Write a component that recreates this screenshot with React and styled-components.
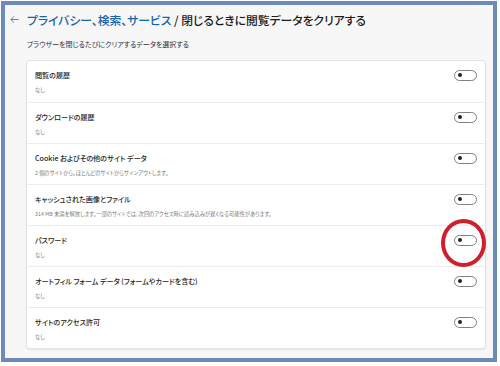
import React from 'react'
import styled, { createGlobalStyle } from 'styled-components';

const GlobalStyle = createGlobalStyle`
    html, body {
        margin: 0;
        padding: 0;
        background: #ffffff;
    }
    body {
        font-family: "Noto Sans CJK JP", "Noto Sans", sans-serif;
        font-feature-settings: "palt";
    }
`;

const Frame = styled.div`
    box-sizing: border-box;
    position: relative;
    width: 496px;
    height: 361px;
    margin: 1px 0 0 1px;
    border: 4px solid #6c8bb9;
    background: #f7f7f7;
    display: flex;
    flex-direction: column;
    padding: 3px 7px 0 5px;
`;

const Header = styled.div`
    display: flex;
    align-items: center;
    gap: 8px;
    height: 22px;
    font-size: 11.8px;
    font-weight: 500;
    color: #1b1b1b;
    white-space: nowrap;
`;

const Crumb = styled.span`
    color: #1565a6;
`;

const Hint = styled.div`
    margin: 9px 0 0 17px;
    height: 11px;
    line-height: 11px;
    font-size: 7px;
    color: #333;
`;

const Card = styled.div`
    margin: 10px 0 0 16px;
    background: #ffffff;
    border: 1px solid #e3e3e3;
    border-radius: 4px;
    box-shadow: 0 1px 2px rgba(0, 0, 0, 0.08);
    display: flex;
    flex-direction: column;
`;

const Row = styled.div`
    box-sizing: border-box;
    height: 41px;
    display: flex;
    align-items: flex-start;
    justify-content: space-between;
    padding: 7.5px 8px 0 8px;
    border-top: ${p => (p.first ? 'none' : '1px solid #ededed')};
`;

const Texts = styled.div`
    display: flex;
    flex-direction: column;
`;

const Title = styled.div`
    font-size: 7.1px;
    line-height: 12px;
    font-weight: 500;
    color: #1e1e1e;
    white-space: nowrap;
`;

const Sub = styled.div`
    margin-top: 4px;
    font-size: 5.3px;
    line-height: 10px;
    color: #7a7a7a;
    white-space: nowrap;
`;

const Toggle = styled.span`
    position: relative;
    box-sizing: border-box;
    margin-top: 1px;
    width: 23px;
    height: 11px;
    border: 1px solid #808080;
    border-radius: 6px;
    background: #fff;
    &::after {
        content: '';
        position: absolute;
        left: 3px;
        top: 2.5px;
        width: 4px;
        height: 4px;
        border-radius: 50%;
        background: #222;
    }
`;

const Mark = styled.span`
    position: absolute;
    left: 436px;
    top: 214px;
    width: 45px;
    height: 48px;
    box-sizing: border-box;
    border: 4px solid #cf1f2b;
    border-radius: 50%;
`;

const items = [
    ['閲覧の履歴', 'なし'],
    ['ダウンロードの履歴', 'なし'],
    ['Cookie およびその他のサイト データ', '2 個のサイトから。ほとんどのサイトからサインアウトします。'],
    ['キャッシュされた画像とファイル', '314 MB 未満を解放します。一部のサイトでは、次回のアクセス時に読み込みが遅くなる可能性があります。'],
    ['パスワード', 'なし'],
    ['オートフィル フォーム データ (フォームやカードを含む)', 'なし'],
    ['サイトのアクセス許可', 'なし'],
];

export default function App() {
    return (
        <>
            <GlobalStyle />
            <Frame>
                <Header>
                    <svg width="9" height="9" viewBox="0 0 10 10" fill="none" stroke="#3d78b3" strokeWidth="1">
                        <path d="M9.5 5H1M4.5 1.5L1 5l3.5 3.5" />
                    </svg>
                    <span>
                        <Crumb>プライバシー、検索、サービス</Crumb> / 閉じるときに閲覧データをクリアする
                    </span>
                </Header>
                <Hint>ブラウザーを閉じるたびにクリアするデータを選択する</Hint>
                <Card>
                    {items.map(([t, s], i) => (
                        <Row key={t} first={i === 0}>
                            <Texts>
                                <Title>{t}</Title>
                                <Sub>{s}</Sub>
                            </Texts>
                            <Toggle />
                        </Row>
                    ))}
                </Card>
                <Mark />
            </Frame>
        </>
    )
}
